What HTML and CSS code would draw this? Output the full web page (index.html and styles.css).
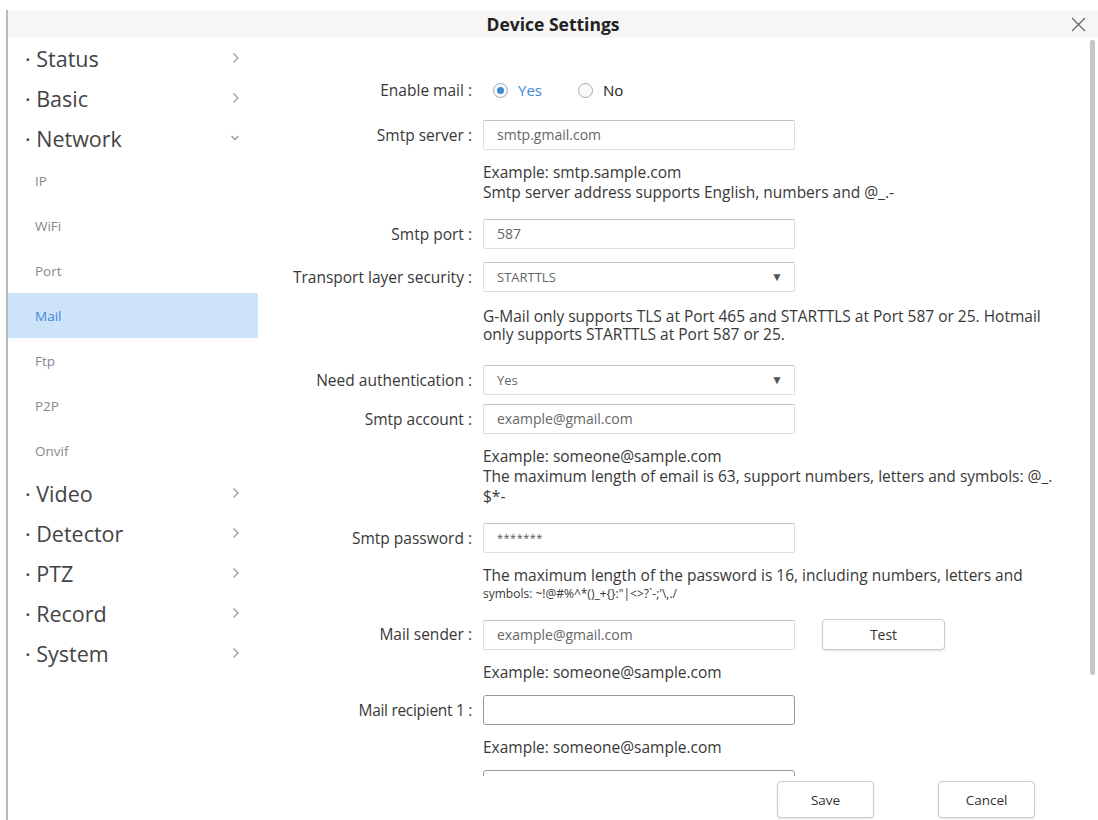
FILE: index.html
```html
<!DOCTYPE html>
<html>
<head>
    <title>Device Settings</title>
    <link rel="stylesheet" href="styles.css">
</head>
<body>
    <div class="dialog">
        <div class="dialog-head">
            <span></span>
            <h1>Device Settings</h1>
            <button class="close" type="button" aria-label="Close">
                <svg width="15" height="15" viewBox="0 0 15 15"><path d="M1 1L14 14M14 1L1 14" stroke="#666" stroke-width="1.3" fill="none"/></svg>
            </button>
        </div>

        <div class="dialog-body">
            <nav class="sidebar">
                <a class="nav-item">· Status <svg class="chev" width="8" height="12" viewBox="0 0 8 12"><path d="M1.5 1.5L6 6l-4.5 4.5" stroke="#999" stroke-width="1.3" fill="none"/></svg></a>
                <a class="nav-item">· Basic <svg class="chev" width="8" height="12" viewBox="0 0 8 12"><path d="M1.5 1.5L6 6l-4.5 4.5" stroke="#999" stroke-width="1.3" fill="none"/></svg></a>
                <a class="nav-item">· Network <svg class="chev" width="10" height="8" viewBox="0 0 10 8"><path d="M1.5 2l3.5 3.5L8.5 2" stroke="#999" stroke-width="1.3" fill="none"/></svg></a>
                <a class="sub-item">IP</a>
                <a class="sub-item">WiFi</a>
                <a class="sub-item">Port</a>
                <a class="sub-item active">Mail</a>
                <a class="sub-item">Ftp</a>
                <a class="sub-item">P2P</a>
                <a class="sub-item">Onvif</a>
                <a class="nav-item">· Video <svg class="chev" width="8" height="12" viewBox="0 0 8 12"><path d="M1.5 1.5L6 6l-4.5 4.5" stroke="#999" stroke-width="1.3" fill="none"/></svg></a>
                <a class="nav-item">· Detector <svg class="chev" width="8" height="12" viewBox="0 0 8 12"><path d="M1.5 1.5L6 6l-4.5 4.5" stroke="#999" stroke-width="1.3" fill="none"/></svg></a>
                <a class="nav-item">· PTZ <svg class="chev" width="8" height="12" viewBox="0 0 8 12"><path d="M1.5 1.5L6 6l-4.5 4.5" stroke="#999" stroke-width="1.3" fill="none"/></svg></a>
                <a class="nav-item">· Record <svg class="chev" width="8" height="12" viewBox="0 0 8 12"><path d="M1.5 1.5L6 6l-4.5 4.5" stroke="#999" stroke-width="1.3" fill="none"/></svg></a>
                <a class="nav-item">· System <svg class="chev" width="8" height="12" viewBox="0 0 8 12"><path d="M1.5 1.5L6 6l-4.5 4.5" stroke="#999" stroke-width="1.3" fill="none"/></svg></a>
            </nav>

            <div class="panel">
                <div class="panel-scroll">
                    <form class="mail-form">
                        <div class="row radio-row">
                            <label>Enable mail :</label>
                            <div class="control radios">
                                <span class="radio checked"></span><span class="radio-text on">Yes</span>
                                <span class="radio"></span><span class="radio-text">No</span>
                            </div>
                        </div>

                        <div class="row">
                            <label>Smtp server :</label>
                            <div class="control">
                                <div class="input">smtp.gmail.com</div>
                                <p class="hint">Example: smtp.sample.com<br>Smtp server address supports English, numbers and @_.-</p>
                            </div>
                        </div>

                        <div class="row">
                            <label>Smtp port :</label>
                            <div class="control"><div class="input">587</div></div>
                        </div>

                        <div class="row">
                            <label>Transport layer security :</label>
                            <div class="control">
                                <div class="input select">STARTTLS <span class="caret">▼</span></div>
                                <p class="hint note">G-Mail only supports TLS at Port 465 and STARTTLS at Port 587 or 25. Hotmail only supports STARTTLS at Port 587 or 25.</p>
                            </div>
                        </div>

                        <div class="row">
                            <label>Need authentication :</label>
                            <div class="control"><div class="input select">Yes <span class="caret">▼</span></div></div>
                        </div>

                        <div class="row tight">
                            <label>Smtp account :</label>
                            <div class="control">
                                <div class="input">example@gmail.com</div>
                                <p class="hint">Example: someone@sample.com<br>The maximum length of email is 63, support numbers, letters and symbols: @_.<br>$*-</p>
                            </div>
                        </div>

                        <div class="row">
                            <label>Smtp password :</label>
                            <div class="control">
                                <div class="input secret">*******</div>
                                <p class="hint">The maximum length of the password is 16, including numbers, letters and<small>symbols: ~!@#%^*()_+{}:"|&lt;&gt;?`-;'\,./</small></p>
                            </div>
                        </div>

                        <div class="row">
                            <label>Mail sender :</label>
                            <div class="control">
                                <div class="inline">
                                    <div class="input">example@gmail.com</div>
                                    <button type="button" class="btn test">Test</button>
                                </div>
                                <p class="hint short">Example: someone@sample.com</p>
                            </div>
                        </div>

                        <div class="row">
                            <label class="narrow">Mail recipient 1 :</label>
                            <div class="control">
                                <div class="input focus"></div>
                                <p class="hint short">Example: someone@sample.com</p>
                            </div>
                        </div>

                        <div class="row">
                            <label></label>
                            <div class="control"><div class="input focus"></div></div>
                        </div>
                    </form>
                    <div class="scrollbar"><span class="thumb"></span></div>
                </div>

                <div class="panel-foot">
                    <button type="button" class="btn">Save</button>
                    <button type="button" class="btn">Cancel</button>
                </div>
            </div>
        </div>
    </div>
</body>
</html>
```

FILE: styles.css
```css
* { box-sizing: border-box; }
html, body { margin: 0; height: 100%; background: #fff; overflow: hidden; }
body { font-family: "Open Sans", "Noto Sans", sans-serif; color: #333; }

.dialog { margin: 10px 0 0 6px; height: 810px; border-left: 2px solid #b9b9b9; display: flex; flex-direction: column; }

/* title bar */
.dialog-head { height: 28px; background: #f6f6f6; display: grid; grid-template-columns: 1fr auto 1fr; align-items: center; }
.dialog-head h1 { margin: 0; font-size: 17.5px; font-weight: 700; color: #222; }
.close { justify-self: end; margin-right: 12px; border: none; background: none; padding: 0; width: 15px; height: 15px; }

.dialog-body { flex: 1; display: flex; min-height: 0; }

/* left menu */
.sidebar { width: 250px; flex-shrink: 0; display: flex; flex-direction: column; }
.nav-item { height: 40px; display: flex; align-items: center; justify-content: space-between; padding: 0 18px 0 17px; font-size: 21.5px; color: #444; }
.sub-item { height: 45px; display: flex; align-items: center; padding-left: 27px; font-size: 13.5px; color: #888; }
.sub-item.active { background: #cde3f9; color: #3b8ad6; }

/* right panel */
.panel { flex: 1; display: flex; flex-direction: column; min-width: 0; }
.panel-scroll { flex: 1; display: flex; min-height: 0; overflow: hidden; }
.mail-form { flex: 1; padding-top: 40px; }
.scrollbar { width: 8px; padding: 2px 2px 0 0; }
.thumb { display: block; width: 5px; height: 635px; background: #c6c6c6; border-radius: 2px; }

.row { display: flex; align-items: flex-start; margin-bottom: 13px; }
.row.tight { margin-top: -4px; }
.row label { width: 214px; flex-shrink: 0; text-align: right; font-size: 15.5px; line-height: 30px; color: #383838; white-space: nowrap; }
.row label.narrow { letter-spacing: -0.3px; }
.control { margin-left: 11px; width: 600px; }

.radio-row { height: 24px; margin-bottom: 18px; }
.radio-row label { line-height: 24px; }
.radios { display: flex; align-items: center; height: 24px; }
.radio { width: 15px; height: 15px; border: 1px solid #aaa; border-radius: 50%; background: #fafafa; margin: 0 10px; position: relative; flex-shrink: 0; }
.radio.checked { border-color: #9ab; }
.radio.checked::after { content: ""; position: absolute; left: 3px; top: 3px; width: 7px; height: 7px; border-radius: 50%; background: #3b8ad6; }
.radio-text { font-size: 15px; margin-right: 26px; color: #222; }
.radio-text.on { color: #3b8ad6; }

.input { width: 312px; height: 30px; border: 1px solid #ddd; border-top-color: #c4c4c4; border-radius: 2px; padding: 0 13px; font-size: 14px; line-height: 28px; color: #666; background: #fff; }
.input.select { display: flex; justify-content: space-between; align-items: center; font-size: 13px; padding-right: 11px; }
.caret { font-size: 12px; color: #555; }
.input.secret { font-size: 11px; letter-spacing: 0.5px; color: #555; }
.input.focus { border-color: #999; border-radius: 3px; }

.inline { display: flex; align-items: center; }

.hint { margin: 12px 0 4px; font-size: 15.5px; line-height: 20px; color: #383838; }
.hint.note { margin: 15px 0 9px; width: 585px; line-height: 18px; }
.hint.short { margin-bottom: 0; }
.hint small { display: block; font-size: 12px; line-height: 17px; }

.btn { font-family: inherit; font-size: 13.5px; color: #333; background: #fff; border: 1px solid #ccc; border-radius: 4px; box-shadow: 0 1px 2px rgba(0,0,0,0.12); }
.btn.test { width: 123px; height: 31px; margin-left: 27px; font-size: 14px; }

.panel-foot { height: 44px; display: flex; justify-content: flex-end; gap: 64px; padding: 5px 63px 0 0; background: #fff; }
.panel-foot .btn { width: 97px; height: 37px; }
```
